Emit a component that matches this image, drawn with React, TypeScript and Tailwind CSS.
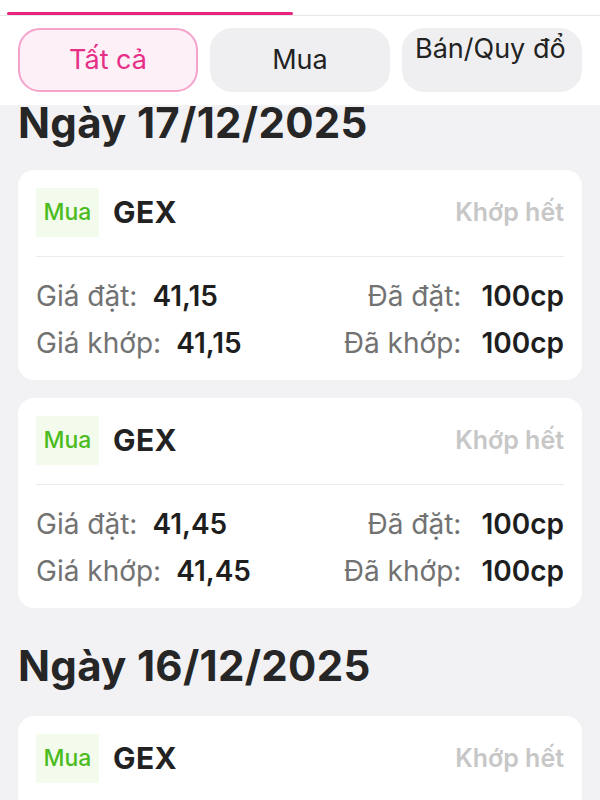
const font = { fontFamily: 'Inter, "Noto Sans", "DejaVu Sans", sans-serif' };

interface Order {
  id: string;
  side: string;
  symbol: string;
  status: string;
  orderPrice: string;
  matchedPrice: string;
  orderQty: string;
  matchedQty: string;
}

interface DayGroup {
  date: string;
  orders: Order[];
}

const groups: DayGroup[] = [
  {
    date: '17/12/2025',
    orders: [
      { id: 'a1', side: 'Mua', symbol: 'GEX', status: 'Khớp hết', orderPrice: '41,15', matchedPrice: '41,15', orderQty: '100cp', matchedQty: '100cp' },
      { id: 'a2', side: 'Mua', symbol: 'GEX', status: 'Khớp hết', orderPrice: '41,45', matchedPrice: '41,45', orderQty: '100cp', matchedQty: '100cp' },
    ],
  },
  {
    date: '16/12/2025',
    orders: [
      { id: 'b1', side: 'Mua', symbol: 'GEX', status: 'Khớp hết', orderPrice: '41,30', matchedPrice: '41,30', orderQty: '100cp', matchedQty: '100cp' },
    ],
  },
];

function OrderCard({ order }: { order: Order }) {
  return (
    <div className="bg-white rounded-[16px] px-[18px] pt-[18px] pb-[13px]">
      <div className="flex items-center">
        <div className="w-[63px] h-[49px] bg-[#f3fbec] flex items-center justify-center text-[23px] font-medium text-[#4cbb1f]">
          {order.side}
        </div>
        <div className="ml-[14px] text-[30px] font-bold text-[#222] tracking-[0.4px]">{order.symbol}</div>
        <div className="ml-auto text-[25px] font-semibold text-[#c7c7c7]">{order.status}</div>
      </div>
      <div className="h-px bg-[#ebebeb] mt-[19px] mb-[16px]" />
      <div className="grid grid-cols-2 text-[28px] leading-[47px]">
        <div className="flex">
          <span className="text-[#727272]">Giá đặt:</span>
          <span className="ml-[15px] font-semibold text-[#1e1e1e]">{order.orderPrice}</span>
        </div>
        <div className="flex justify-end">
          <span className="text-[#727272]">Đã đặt:</span>
          <span className="ml-[20px] font-semibold text-[#1e1e1e]">{order.orderQty}</span>
        </div>
        <div className="flex">
          <span className="text-[#727272]">Giá khớp:</span>
          <span className="ml-[15px] font-semibold text-[#1e1e1e]">{order.matchedPrice}</span>
        </div>
        <div className="flex justify-end">
          <span className="text-[#727272]">Đã khớp:</span>
          <span className="ml-[20px] font-semibold text-[#1e1e1e]">{order.matchedQty}</span>
        </div>
      </div>
    </div>
  );
}

export default function App() {
  return (
    <main className="w-[600px] h-[800px] overflow-hidden bg-[#f2f2f5] flex flex-col" style={font}>
      <div className="bg-white shrink-0">
        <div className="relative h-[16px] border-b border-[#e8e8e8]">
          <div className="absolute left-[7px] top-[12px] w-[286px] h-[3px] rounded-full bg-[#e8247f]" />
        </div>
        <div className="grid grid-cols-3 gap-[12px] px-[18px] pt-[12px] pb-[13px]">
          <button className="h-[64px] rounded-[22px] border-2 border-[#f5a3cb] bg-[#fdf0f6] text-[27px] text-[#e62f87]">
            Tất cả
          </button>
          <button className="h-[64px] rounded-[22px] bg-[#efeff1] text-[27px] text-[#222]">Mua</button>
          <button className="h-[64px] rounded-[22px] bg-[#efeff1] text-[27px] leading-[32px] text-[#222] text-left pl-[13px] pt-[5px] flex items-start whitespace-nowrap overflow-hidden">
            Bán/Quy đổ
          </button>
        </div>
      </div>

      <div className="px-[18px]">
        {groups.map((group, i) => (
          <section key={group.date} className={i > 0 ? 'mt-[40px]' : ''}>
            <h2 className="text-[42px] leading-[36px] font-bold text-[#262626] tracking-[0.3px]">Ngày {group.date}</h2>
            <div className={`${i > 0 ? 'mt-[32px]' : 'mt-[29px]'} flex flex-col gap-[18px]`}>
              {group.orders.map((order) => (
                <OrderCard key={order.id} order={order} />
              ))}
            </div>
          </section>
        ))}
      </div>
    </main>
  );
}
